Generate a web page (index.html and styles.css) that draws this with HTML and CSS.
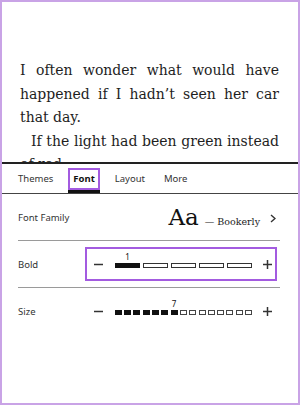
FILE: index.html
```html
<!DOCTYPE html>
<html lang="en">
<head>
    <meta charset="UTF-8">
    <meta name="viewport" content="width=device-width, initial-scale=1.0">
    <title>Reader - Font</title>
    <link rel="stylesheet" href="styles.css">
</head>
<body>
    <div class="page">

        <!-- Book text, cut off by the settings panel -->
        <div class="reader">
            <p>I often wonder what would have happened if I hadn’t seen her car that day.</p>
            <p class="indent">If the light had been green instead of red</p>
        </div>

        <!-- Settings panel -->
        <div class="panel">
            <nav class="tabs">
                <span class="tab">Themes</span>
                <span class="tab active"><span class="mark">Font</span></span>
                <span class="tab">Layout</span>
                <span class="tab">More</span>
            </nav>

            <div class="row">
                <span class="label">Font Family</span>
                <span class="family">
                    <span class="sample">Aa</span>
                    <span class="name">— Bookerly</span>
                    <svg class="chevron" width="6" height="9" viewBox="0 0 6 9">
                        <polyline points="1,1 5,4.5 1,8" fill="none" stroke="#333" stroke-width="1.4"/>
                    </svg>
                </span>
            </div>

            <div class="row">
                <span class="label">Bold</span>
                <div class="stepper marked">
                    <svg class="sign" width="9" height="9" viewBox="0 0 9 9">
                        <line x1="0" y1="4.5" x2="9" y2="4.5" stroke="#333" stroke-width="1.5"/>
                    </svg>
                    <div class="levels">
                        <span class="seg on cur" data-n="1"></span>
                        <span class="seg"></span>
                        <span class="seg"></span>
                        <span class="seg"></span>
                        <span class="seg"></span>
                    </div>
                    <svg class="sign" width="9" height="9" viewBox="0 0 9 9">
                        <line x1="0" y1="4.5" x2="9" y2="4.5" stroke="#333" stroke-width="1.5"/>
                        <line x1="4.5" y1="0" x2="4.5" y2="9" stroke="#333" stroke-width="1.5"/>
                    </svg>
                </div>
            </div>

            <div class="row last">
                <span class="label">Size</span>
                <div class="stepper">
                    <svg class="sign" width="9" height="9" viewBox="0 0 9 9">
                        <line x1="0" y1="4.5" x2="9" y2="4.5" stroke="#333" stroke-width="1.5"/>
                    </svg>
                    <div class="levels small">
                        <span class="dot on"></span>
                        <span class="dot on"></span>
                        <span class="dot on"></span>
                        <span class="dot on"></span>
                        <span class="dot on"></span>
                        <span class="dot on"></span>
                        <span class="dot on cur" data-n="7"></span>
                        <span class="dot"></span>
                        <span class="dot"></span>
                        <span class="dot"></span>
                        <span class="dot"></span>
                        <span class="dot"></span>
                        <span class="dot"></span>
                        <span class="dot"></span>
                        <span class="dot"></span>
                    </div>
                    <svg class="sign" width="9" height="9" viewBox="0 0 9 9">
                        <line x1="0" y1="4.5" x2="9" y2="4.5" stroke="#333" stroke-width="1.5"/>
                        <line x1="4.5" y1="0" x2="4.5" y2="9" stroke="#333" stroke-width="1.5"/>
                    </svg>
                </div>
            </div>
        </div>

    </div>
</body>
</html>
```

FILE: styles.css
```css
body, html {
    margin: 0;
    padding: 0;
    background: #fff;
}

.page {
    width: 300px;
    height: 405px;
    box-sizing: border-box;
    border: 2px solid #c9a3e6;
    display: flex;
    flex-direction: column;
    overflow: hidden;
}

/* book text */
.reader {
    height: 160px;
    flex-shrink: 0;
    overflow: hidden;
    padding: 57px 19px 0 18px;
    box-sizing: border-box;
    font-family: 'DejaVu Serif', serif;
    font-size: 14px;
    line-height: 23.5px;
    color: #1e1e1e;
    text-align: justify;
}

.reader p {
    margin: 0;
}

.reader .indent {
    text-indent: 11px;
}

/* settings panel */
.panel {
    flex: 1;
    border-top: 2px solid #222;
    font-family: 'Noto Sans', sans-serif;
    font-size: 9.5px;
    color: #333;
}

.tabs {
    display: flex;
    gap: 15px;
    height: 29px;
    padding-left: 16px;
    border-bottom: 1px solid #444;
}

.tab {
    display: flex;
    align-items: center;
    height: 100%;
}

.tab:last-child {
    margin-left: 4px;
}

.tab.active {
    box-shadow: inset 0 -3px 0 #111;
    font-weight: bold;
    color: #111;
}

.mark {
    border: 2px solid #a35be0;
    padding: 2px 3px;
    line-height: 14px;
}

.row {
    display: flex;
    align-items: center;
    height: 46px;
    margin: 0 18px 0 16px;
    border-bottom: 1px solid #9a9a9a;
}

.row.last {
    border-bottom: none;
}

.family {
    margin-left: auto;
    margin-right: 4px;
    display: flex;
    align-items: baseline;
}

.sample {
    font-family: 'DejaVu Serif', serif;
    font-size: 23px;
    color: #111;
}

.name {
    font-family: 'DejaVu Serif', serif;
    font-size: 9.5px;
    margin: 0 10px 0 6px;
    color: #222;
}

.chevron {
    align-self: center;
    margin-top: 2px;
}

/* stepper controls */
.stepper {
    margin-left: auto;
    margin-right: 3px;
    display: flex;
    align-items: center;
    height: 30px;
    padding: 0 3px 0 7px;
    border: 2px solid transparent;
}

.stepper.marked {
    border-color: #a35be0;
}

.levels {
    display: flex;
    gap: 3px;
    margin: 2px 11px 0 12px;
}

.seg {
    position: relative;
    width: 23px;
    height: 3px;
    border: 1px solid #333;
}

.seg.on {
    background: #111;
    border-color: #111;
}

.levels.small {
    gap: 2.3px;
}

.dot {
    position: relative;
    width: 5px;
    height: 3px;
    border: 1px solid #444;
}

.dot.on {
    background: #111;
    border-color: #111;
}

/* current level number sits over the bar */
.cur::before {
    content: attr(data-n);
    position: absolute;
    left: 50%;
    bottom: calc(100% + 3px);
    transform: translateX(-50%);
    font-size: 8px;
    line-height: 8px;
    color: #111;
}
```
